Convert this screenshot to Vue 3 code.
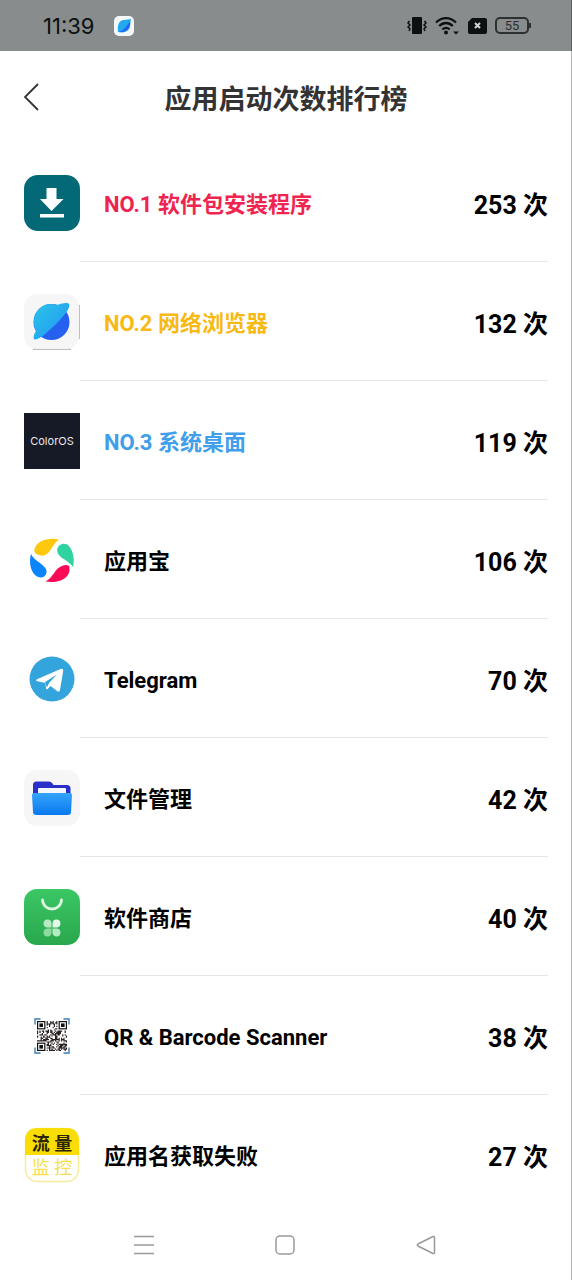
<script setup>
const apps = [
  { icon: 'installer', name: '软件包安装程序', count: 253 },
  { icon: 'browser', name: '网络浏览器', count: 132 },
  { icon: 'coloros', name: '系统桌面', count: 119 },
  { icon: 'yyb', name: '应用宝', count: 106 },
  { icon: 'telegram', name: 'Telegram', count: 70 },
  { icon: 'files', name: '文件管理', count: 42 },
  { icon: 'store', name: '软件商店', count: 40 },
  { icon: 'qr', name: 'QR & Barcode Scanner', count: 38 },
  { icon: 'traffic', name: '应用名获取失败', count: 27 },
]

const label = (app, index) => (index < 3 ? `NO.${index + 1} ${app.name}` : app.name)

// data modules of the QR icon, everything outside the three finder squares
const QR_SIZE = 25
const qrPath = (() => {
  let seed = 11
  let d = ''
  for (let y = 0; y < QR_SIZE; y++) {
    for (let x = 0; x < QR_SIZE; x++) {
      seed = (seed * 1103515245 + 12345) % 2147483648
      const inFinder = (x < 8 && y < 8) || (x > 16 && y < 8) || (x < 8 && y > 16)
      if (!inFinder && seed / 2147483648 < 0.52) d += `M${x} ${y}h1v1h-1z`
    }
  }
  return d
})()
const finders = [
  [0, 0],
  [18, 0],
  [0, 18],
]
</script>

<template>
  <div class="screen">
    <div class="status-bar">
      <span class="clock">11:39</span>
      <svg class="notice" viewBox="0 0 20 20" aria-hidden="true">
        <rect width="20" height="20" rx="5" fill="#f4f8fb" />
        <path d="M4 16C3 9 5 4 10 4l7-1c-1 3 0 7-2 10-2 3-6 4-11 3z" fill="#22aaf0" />
        <path d="M16 5c0 4 0 7-3 9-2 2-5 2-8 2 5-2 8-6 11-11z" fill="#2464f2" />
      </svg>
      <div class="indicators">
        <svg width="20" height="20" viewBox="0 0 20 20" aria-hidden="true">
          <rect x="5" y="1" width="10" height="17" rx="1" fill="#0b1011" />
          <path d="M2.5 5 1 7l2 2-2 2 2 2-1 2M17.5 5 19 7l-2 2 2 2-2 2 1 2" fill="none" stroke="#0b1011" stroke-width="1.5" />
        </svg>
        <svg width="24" height="20" viewBox="0 0 24 20" aria-hidden="true">
          <g fill="none" stroke="#0b1011" stroke-width="2.3">
            <path d="M1 6.5C7 .7 15 .7 21 6.5" />
            <path d="M4.2 10c4-4 9.6-4 13.6 0" />
            <path d="M7.3 13.5c2.3-2 5.1-2 7.4 0" />
          </g>
          <circle cx="11" cy="16.5" r="2" fill="#0b1011" />
          <path d="M18 15.5h6l-3 3z" fill="#0b1011" />
        </svg>
        <svg width="20" height="20" viewBox="0 0 20 20" aria-hidden="true">
          <path d="M5 2h13q2 0 2 2v12q0 2-2 2H3q-2 0-2-2V6z" fill="#0b1011" />
          <path d="m8 7 5 5m0-5-5 5" stroke="#d0d4d4" stroke-width="2" />
        </svg>
        <div class="battery">55</div>
      </div>
    </div>

    <header class="header">
      <button class="back" type="button" aria-label="返回">
        <svg width="16" height="28" viewBox="0 0 16 28">
          <path d="M14 1 1 14l13 13" fill="none" stroke="#333" stroke-width="1.8" />
        </svg>
      </button>
      <h1>应用启动次数排行榜</h1>
    </header>

    <ol class="ranking">
      <li v-for="(app, index) in apps" :key="app.icon" class="row" :class="`rank-${index + 1}`">
        <svg class="app-icon" viewBox="0 0 56 56" aria-hidden="true">
          <g v-if="app.icon === 'installer'">
            <rect width="56" height="56" rx="14" fill="#046977" />
            <path d="M22.5 13h10v11h7L27.5 36 16 24h6.5z" fill="#fff" />
            <rect x="16" y="39" width="24" height="3.5" fill="#fff" />
          </g>

          <g v-else-if="app.icon === 'browser'">
            <defs>
              <linearGradient id="planet" x1="0" y1="0" x2="1" y2="1">
                <stop offset="0" stop-color="#2ac6e8" />
                <stop offset="1" stop-color="#2492f4" />
              </linearGradient>
            </defs>
            <path d="M55.2 11v34M9 55.2h38" fill="none" stroke="#bdbdbd" stroke-width="1.5" />
            <rect width="55" height="55" rx="13" fill="#f6f6f6" />
            <circle cx="27.5" cy="28" r="18" fill="#2560f0" />
            <path
              d="M12 37C5 22 17 6 33 11c5-2 11-3 12-1 2 3-4 11-12 19S13 48 10 45c-1-2 0-5 2-8z"
              fill="url(#planet)"
            />
          </g>

          <g v-else-if="app.icon === 'coloros'">
            <rect width="56" height="56" fill="#161a26" />
            <text x="28" y="32" text-anchor="middle" class="coloros-text">ColorOS</text>
          </g>

          <g v-else-if="app.icon === 'yyb'">
            <path d="M10.5 17C13 9 23 5 35 7.5c-3 2-5 5-8 9.5-3 6-8 8-12 6-4-1-5-3-4.5-6z" fill="#fec90c" />
            <path d="M34 15c3-4 8-4 11-1 4 5 6 13 4 21-3-4-6-6-11-9-4-3-6-7-4-11z" fill="#2fd3a0" />
            <path d="M45 34c3 10-7 18-23.5 15.5 4-2 6-5 9-9 4-6 11-9 14.5-6.5z" fill="#fb0a58" />
            <path d="M7 22c2 4 5 6 9 9 5 4 8 7 6 11-2 5-8 4-11 1C6 38 5 29 7 22z" fill="#0c85fb" />
          </g>

          <g v-else-if="app.icon === 'telegram'">
            <circle cx="28" cy="28" r="22.5" fill="#34a4dd" />
            <path
              d="M12.5 30q-1-1 .5-1.8L36.500 18q3-1 2.700 2L36 39q-.6 2.500-2.600 1.200L26.500 35l-3 3q-1.500 1-1.500-1l-.5-5z"
              fill="#fff"
            />
            <path d="m21 31 12-7.500-8 8.500-2 4.500z" fill="#34a4dd" />
          </g>

          <g v-else-if="app.icon === 'files'">
            <defs>
              <linearGradient id="folder" x1="0" y1="0" x2="0" y2="1">
                <stop offset="0" stop-color="#36a4fb" />
                <stop offset="1" stop-color="#0878f0" />
              </linearGradient>
            </defs>
            <rect width="56" height="56" rx="13" fill="#f6f6f6" />
            <path d="M9 27V15q0-3.5 3.5-3.5H25q2 0 3.5 2l1 1.500h13.500q3.500 0 3.500 3.500V27z" fill="#2b2fca" />
            <rect x="14" y="18" width="28" height="8" rx="1" fill="#f4f6ff" />
            <path d="M8 25q0-2 2-2h36q2 0 2 2l-1 17q0 3-3.500 3h-31Q9 45 9 42z" fill="url(#folder)" />
          </g>

          <g v-else-if="app.icon === 'store'">
            <defs>
              <linearGradient id="bag" x1="0" y1="0" x2="0" y2="1">
                <stop offset="0" stop-color="#3bc764" />
                <stop offset="1" stop-color="#29a74e" />
              </linearGradient>
            </defs>
            <rect width="56" height="56" rx="13" fill="url(#bag)" />
            <path d="M18.5 11c1 12 18 12 19 0" fill="none" stroke="#dcf8e1" stroke-width="2.8" stroke-linecap="round" />
            <path d="M27.5 38.5H23a4 4 0 1 1 4.5-4.5z" fill="#b6eac2" />
            <path d="M28.5 38.5H33a4 4 0 1 0-4.5-4.5z" fill="#e4fae8" />
            <path d="M27.5 39.5H23a4 4 0 1 0 4.5 4.5z" fill="#8edaa0" />
            <path d="M28.5 39.5H33a4 4 0 1 1-4.5 4.5z" fill="#b6eac2" />
          </g>

          <g v-else-if="app.icon === 'qr'">
            <path
              d="M11 16.5V11h5.5M39.5 11H45v5.5M45 39.5V45h-5.5M16.5 45H11v-5.5"
              fill="none"
              stroke="#6d9bc6"
              stroke-width="1.8"
            />
            <g transform="translate(13 13) scale(1.2)">
              <path :d="qrPath" fill="#2a2222" />
              <g v-for="[x, y] in finders" :key="`${x}-${y}`">
                <rect :x="x + 0.5" :y="y + 0.5" width="6" height="6" fill="none" stroke="#111" />
                <rect :x="x + 2" :y="y + 2" width="3" height="3" fill="#111" />
              </g>
            </g>
          </g>

          <g v-else>
            <rect x="1.5" y="1.5" width="53" height="53" rx="12" fill="#fff" stroke="#f5ec9c" stroke-width="1.5" />
            <path d="M1 28V14Q1 1 14 1h28q13 0 13 13v14z" fill="#fbdd06" />
            <text x="28" y="23" text-anchor="middle" class="traffic-text">流 量</text>
            <text x="28" y="47" text-anchor="middle" class="traffic-text yellow">监 控</text>
          </g>
        </svg>

        <div class="name">{{ label(app, index) }}</div>
        <div class="count">{{ app.count }} 次</div>
      </li>
    </ol>

    <nav class="nav-bar">
      <button type="button" aria-label="最近任务">
        <svg width="20" height="20" viewBox="0 0 20 20">
          <path d="M0 1.5h20M0 10h20M0 18.5h20" />
        </svg>
      </button>
      <button type="button" aria-label="主屏幕">
        <svg width="20" height="20" viewBox="0 0 20 20">
          <rect x="1" y="1" width="18" height="18" rx="4" />
        </svg>
      </button>
      <button type="button" aria-label="返回上一页">
        <svg width="20" height="20" viewBox="0 0 20 20">
          <path d="M17 1.5 2 9q-1.5 1 0 2l15 7.5q1.5.5 1.5-1v-15q0-1.5-1.500-1z" />
        </svg>
      </button>
    </nav>
  </div>
</template>

<style>
body {
  margin: 0;
  background: #fff;
}
</style>

<style scoped>
.screen {
  position: relative;
  min-height: 100vh;
  display: flex;
  flex-direction: column;
  background: #fff;
  color: #000;
  font-family: Roboto, 'Noto Sans CJK SC', sans-serif;
}

/* hairline down the right edge, over the status bar too */
.screen::after {
  content: '';
  position: absolute;
  top: 0;
  right: 0;
  bottom: 0;
  width: 1px;
  background: rgba(0, 0, 0, 0.3);
}

.status-bar {
  height: 51px;
  padding: 0 43px;
  box-sizing: border-box;
  display: flex;
  align-items: center;
  background: #888c8c;
}

.clock {
  color: #0b1011;
  font-family: Inter, sans-serif;
  font-size: 22px;
}

.notice {
  width: 20px;
  height: 20px;
  margin-left: 20px;
}

.indicators {
  margin-left: auto;
  display: flex;
  align-items: center;
  gap: 8px;
}

.battery {
  position: relative;
  width: 34px;
  height: 17px;
  box-sizing: border-box;
  border: 2px solid #2b3031;
  border-radius: 5px;
  color: #2b3031;
  font-size: 13px;
  line-height: 13px;
  text-align: center;
}

.battery::after {
  content: '';
  position: absolute;
  top: 4px;
  right: -4px;
  width: 2px;
  height: 5px;
  background: #2b3031;
}

.header {
  height: 92px;
  padding: 0 24px;
  display: grid;
  grid-template-columns: 40px 1fr 40px;
  align-items: center;
}

.back {
  padding: 0;
  border: none;
  background: none;
  display: flex;
  cursor: pointer;
}

h1 {
  margin: 0;
  padding-top: 6px;
  color: #333;
  font-size: 27px;
  font-weight: 700;
  line-height: 40px;
  text-align: center;
}

.ranking {
  margin: 0;
  padding: 0 24px;
  list-style: none;
}

.row {
  height: 119px;
  display: grid;
  grid-template-columns: 56px 1fr auto;
  align-items: center;
  column-gap: 24px;
  position: relative;
}

.row:not(:last-child)::after {
  content: '';
  position: absolute;
  right: 0;
  bottom: 0;
  left: 56px;
  height: 1px;
  background: #e6e6e6;
}

.app-icon {
  width: 56px;
  height: 56px;
}

.name,
.count {
  font-weight: 700;
  line-height: 32px;
}

.name {
  padding-top: 4px;
  font-size: 22px;
}

.count {
  padding-top: 6px;
  font-size: 25px;
}

.rank-1 .name {
  color: #f0254f;
}

.rank-2 .name {
  color: #f8b913;
}

.rank-3 .name {
  color: #409eea;
}

.coloros-text {
  fill: #e8e9ec;
  font-family: Inter, sans-serif;
  font-size: 11px;
}

.traffic-text {
  fill: #2b2500;
  font-size: 18px;
  font-weight: 700;
}

.traffic-text.yellow {
  fill: #f3e04a;
  font-weight: 400;
}

.nav-bar {
  height: 62px;
  padding: 0 76px 0 73px;
  display: grid;
  grid-template-columns: repeat(3, 1fr);
}

.nav-bar button {
  padding: 0;
  border: none;
  background: none;
  display: flex;
  align-items: center;
  justify-content: center;
  cursor: pointer;
}

.nav-bar svg {
  fill: none;
  stroke: #999;
  stroke-width: 1.5;
}
</style>
